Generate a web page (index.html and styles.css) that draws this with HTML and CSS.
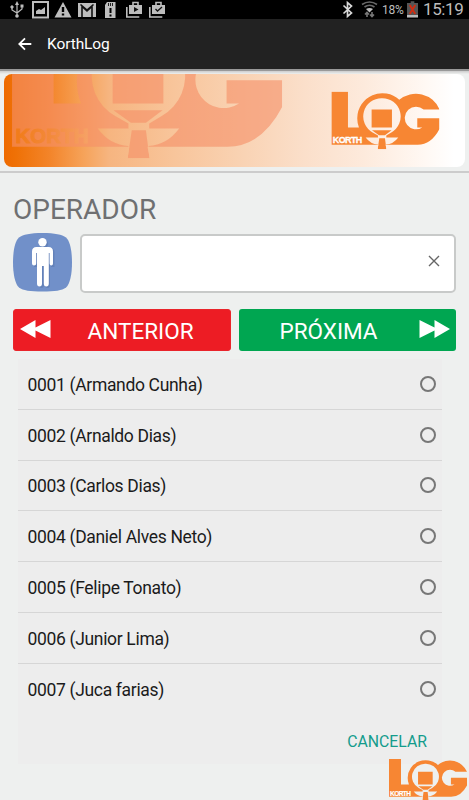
FILE: index.html
```
<!DOCTYPE html>
<html lang="pt-BR">
<head>
<meta charset="utf-8">
<title>KorthLog</title>
<link rel="stylesheet" href="styles.css">
</head>
<body>
<svg class="defs" aria-hidden="true">
  <defs>
    <linearGradient id="fade"><stop offset="0" stop-color="#f17b18"/><stop offset=".5" stop-color="#f38a3c"/><stop offset="1" stop-color="#f6a266"/></linearGradient>
    <mask id="racket" maskUnits="userSpaceOnUse" x="110" y="60" width="350" height="210">
      <rect x="110" y="60" width="350" height="210" fill="#fff"/>
      <path fill="#000" d="M276 98a55 55 0 0 1 28 103l-15 9v6H325q-15 20-37 21l4 18h-32l4-18q-22-1-37-21h37v-6l-16-9A55 55 0 0 1 276 98z"/>
      <path fill="#fff" d="M245 132h61v54h-61zM246 194h59l-20 15h-18zM268 218h17l4.500 34h-26.500z"/>
    </mask>
    <symbol id="logo" viewBox="124 78 325 174" preserveAspectRatio="none">
      <g mask="url(#racket)">
        <path d="M124 78h50v108h33A73 73 0 0 1 202 157A75 75 0 0 1 328 103A77 77 0 0 1 449 132H401A34 34 0 1 0 397 186H382V158H449V190Q424 238 383 238H287L289.500 252H263L265 238H124z"/>
      </g>
    </symbol>
  </defs>
</svg>

<header class="status">
  <svg class="st-left" viewBox="0 0 170 19" fill="none" stroke="#bdbdbd">
    <path d="M17 3v13M12 7v3l5 3 5-4V6" stroke-width="1.200"/><path d="M17 1l2 4h-4z" fill="#bdbdbd" stroke="none"/><circle cx="17" cy="16" r="1.800" fill="#bdbdbd" stroke="none"/><circle cx="12" cy="7" r="1.200" fill="#bdbdbd"/><path d="M20.500 4.500h3v3h-3z" fill="#bdbdbd" stroke="none"/>
    <path d="M33 2h15v15.500H33z" stroke-width="2"/><path d="M36 14v-3l3-2 2 1 4-3v7z" fill="#bdbdbd" stroke="none"/>
    <path fill="#bdbdbd" stroke="none" fill-rule="evenodd" d="M63 2l8.500 15.500h-17zM61.800 7v5h2.400V7zm0 6.500v2h2.400v-2z"/>
    <path fill="#bdbdbd" stroke="none" d="M78 3h18v14H78z"/><path stroke="#111" stroke-width="1.600" d="M82 17V6.500l5 4.500 5-4.500V17M80.500 4.500L87 10l6.500-5.500"/>
    <path fill="#bdbdbd" stroke="none" d="M107 2h8.500v16H105V5z"/><path stroke="#222" stroke-width="1" d="M108.500 3v3M110.500 3v3M112.500 3v3"/><path stroke="#000" stroke-width="2" d="M110.500 8v5M110.500 14.500v2"/>
    <path fill="#bdbdbd" stroke="none" d="M129 5h13v9h-13z"/><path d="M126.800 7v10h12.500M133 5V2.500h5V5" stroke-width="1.600"/><path d="M134 7l4.500 2.500L134 12z" fill="#111" stroke="none"/>
    <path fill="#bdbdbd" stroke="none" d="M152 5h13v9h-13z"/><path d="M149.800 7v10h12.500M156 5V2.500h5V5" stroke-width="1.600"/><path d="M155.500 9l2 2 4.500-4" stroke="#111" stroke-width="1.300"/>
  </svg>
  <div class="st-right">
    <svg class="st-icons" viewBox="340 0 36 19" fill="none">
      <path stroke="#d8d8d8" stroke-width="1.700" d="M343.500 5.500l8 7.500-4 3.500v-14l4 3.500-8 7.500"/>
      <path stroke="#696969" stroke-width="1.700" d="M362 4.500q7.500-5 15 0M364.500 7q5-3.500 10 0"/>
      <path fill="#bdbdbd" d="M366 9q3.500-2 7 0l-3.500 3.500z"/>
      <path stroke="#777" stroke-width="1.600" d="M367 17v-4M365 14.500l2-2 2 2M372 12v4M370 14.500l2 2 2-2"/>
    </svg>
    <span class="pct">18%</span>
    <svg class="batt" viewBox="0 0 12 18"><path fill="#555" d="M4 0h4v2h4v16H0V2h4z"/><path fill="#bbb" d="M0 15h12v2.500H0z"/><path stroke="#d12c10" stroke-width="2" d="M3 4l6 10M9 4L3 14"/></svg>
    <span class="clock">15:19</span>
  </div>
</header>

<nav class="appbar">
  <svg class="back" viewBox="0 0 14 14" fill="none" stroke="#fff" stroke-width="1.800"><path d="M13.300 7H1.500M7 1.300L1.300 7 7 12.700"/></svg>
  <span>KorthLog</span>
</nav>

<section class="brand">
  <div class="banner">
    <svg class="banner-art" viewBox="0 0 461 93">
      <svg x="8" y="-60.300" width="270.300" height="144.700" viewBox="124 78 325 174" class="wm"><use href="#logo" x="124" y="78" width="325" height="174"/></svg>
      <text x="11.500" y="69" class="korth korth-wm" textLength="73">KORTH</text>
      <svg x="327.300" y="17.500" width="108.300" height="58" class="mark"><use href="#logo" width="108.300" height="58"/></svg>
      <text x="328.800" y="69" class="korth korth-sm" textLength="29.500">KORTH</text>
    </svg>
  </div>
</section>

<main>
  <h1>OPERADOR</h1>
  <div class="field">
    <svg class="person" viewBox="0 0 59 59">
      <path fill="#7190c9" d="M29.500 0C42 0 49 1.500 53 4.500 57 8 59 18 59 29.500S57 51 53 54.500C49 57.500 42 58.500 29.500 58.500S10 57.500 6 54.500C2 51 0 41 0 29.500S2 8 6 4.500C10 1.500 17 0 29.500 0z"/>
      <g class="sh"><circle cx="31" cy="11" r="4.200"/><path d="M25 15h12q4.500 0 4.500 4.500V34h-3.500V21h-1v31q0 3-2.500 3t-2.500-3V34h-1v18q0 3-2.500 3T26 52V21h-1v13h-4V19.500Q21 15 25 15z"/></g>
      <g fill="#fff"><circle cx="29.500" cy="9.300" r="4.200"/><path d="M23.500 14h12q4.500 0 4.500 4.500v12q0 2-1.700 2t-1.700-2V20h-.8v30.500q0 3-2.500 3t-2.500-3V33H29v17.500q0 3-2.500 3t-2.500-3V20h-.8v10.500q0 2-2.100 2t-2.100-2v-12Q19 14 23.500 14z"/></g>
    </svg>
    <div class="input"><svg class="clear" viewBox="0 0 12 12"><path d="M1 1l10 10M11 1L1 11" stroke="#666" stroke-width="1.400"/></svg></div>
  </div>
  <div class="buttons">
    <div class="btn prev"><svg class="arrows" viewBox="0 0 31 18"><path fill="#fff" d="M0 9L15.500 0v7.500L30.500 0v18l-15-7.500V18z"/></svg><span>ANTERIOR</span></div>
    <div class="btn next"><span>PRÓXIMA</span><svg class="arrows" viewBox="0 0 31 18"><path fill="#fff" d="M31 9L15.500 0v7.500L.5 0v18l15-7.500V18z"/></svg></div>
  </div>
  <div class="list">
    <div class="row"><span>0001 (Armando Cunha)</span><i></i></div>
    <div class="row"><span>0002 (Arnaldo Dias)</span><i></i></div>
    <div class="row"><span>0003 (Carlos Dias)</span><i></i></div>
    <div class="row"><span>0004 (Daniel Alves Neto)</span><i></i></div>
    <div class="row"><span>0005 (Felipe Tonato)</span><i></i></div>
    <div class="row"><span>0006 (Junior Lima)</span><i></i></div>
    <div class="row"><span>0007 (Juca farias)</span><i></i></div>
    <div class="cancel">CANCELAR</div>
  </div>
</main>
<svg class="corner" viewBox="0 0 78 41"><use href="#logo" width="78" height="41"/><text x="1" y="36.500" class="korth korth-xs" textLength="21">KORTH</text></svg>
</body>
</html>
```

FILE: styles.css
```
* { box-sizing: border-box; }
body { margin: 0; width: 469px; height: 800px; overflow: hidden; position: relative; background: #eef0ef; font-family: Roboto, sans-serif; color: #1b1b1b; }
svg { display: block; flex: none; }
.defs { position: absolute; width: 0; height: 0; }

.status { height: 19px; background: #000; display: flex; justify-content: space-between; color: #bdbdbd; }
.st-left { width: 170px; height: 19px; }
.st-right { display: flex; align-items: center; padding-right: 5px; }
.st-icons { width: 36px; height: 19px; overflow: visible; }
.pct { font-size: 12px; width: 25px; margin-left: 6px; white-space: nowrap; letter-spacing: -.2px; }
.batt { width: 11px; height: 17px; margin-right: 6px; }
.clock { font-size: 17px; line-height: 19px; width: 40px; margin-left: -1px; margin-right: 1px; letter-spacing: -.4px; white-space: nowrap; }

.appbar { height: 52px; padding: 0 19px 1px 18px; display: flex; align-items: center; gap: 15px; color: #fff; font-size: 15.500px; letter-spacing: -.1px; background: #222; border-bottom: 2px solid #999; }
.appbar span { padding-top: 1px; }
.back { width: 14px; height: 14px; }

.brand { height: 102px; padding: 2.500px 4px 0; border-bottom: 2px solid #ccc; background: linear-gradient(#ccc, #eef0ef 3px); }
.banner { height: 93px; border-radius: 8px; overflow: hidden; background: linear-gradient(90deg, #ee6a00 0, #ef7106 12px, #f38429 45px, #f6a35a 80px, #f6b580 105px, #f8c59b 170px, #f9d3b4 240px, #fbdfca 300px, #fdeadc 360px, #fff8f3 420px, #fff 450px); }
.banner-art { width: 461px; height: 93px; }
.wm { fill: #f69068; opacity: .62; }
.mark, .corner { fill: #f78633; }
.korth { font-family: "Liberation Sans", sans-serif; font-weight: 700; }
.korth-wm { font-size: 20.500px; fill: url(#fade); stroke: url(#fade); stroke-width: 1px; }
.korth-sm { font-size: 9px; fill: #fff; stroke: #fff; stroke-width: .3px; }
.korth-xs { font-size: 6.500px; fill: #fff; stroke: #fff; stroke-width: .2px; }

main { padding: 0 13px; }
h1 { margin: 0; padding-top: 20px; height: 60px; font-size: 28px; line-height: 33px; font-weight: 400; color: #6f7072; }
.field { display: flex; gap: 8px; height: 60px; }
.person { width: 59px; height: 59px; }
.sh { fill: #4a669c; opacity: .35; }
.input { width: 376px; height: 59px; margin-top: 1px; background: #fff; border: 2px solid #c8cac9; border-radius: 5px; display: flex; justify-content: flex-end; padding: 19px 14px 0 0; }
.clear { width: 12px; height: 12px; }
.buttons { display: flex; gap: 8px; margin-top: 15.500px; }
.btn { height: 42px; width: 217.500px; border-radius: 3px; color: #fff; font-size: 22.500px; display: flex; align-items: center; justify-content: space-between; }
.prev { background: #ed1c24; border: 1px solid #e9252b; padding: 2px 36px 0 6px; }
.next { background: #00a651; padding: 2px 6px 0 41px; }
.arrows { width: 31px; height: 18px; margin-top: -4px; }
.list { margin: 8.500px 14px 0 5px; height: 405px; background: #ededed; }
.row { height: 50.800px; border-bottom: 1px solid #d6d6d6; display: flex; align-items: center; justify-content: space-between; padding: 2px 6px 0 9.500px; font-size: 17.500px; letter-spacing: -.33px; }
.row i { width: 16px; height: 16px; margin-top: -2px; border: 2px solid #777; border-radius: 50%; }
.row:nth-child(7) { border-bottom-color: transparent; }
.cancel { text-align: right; padding: 17px 15px 0; font-size: 15.800px; line-height: 19px; color: #149c8c; }
.corner { position: absolute; left: 389px; top: 759px; width: 78px; height: 41px; }
```
